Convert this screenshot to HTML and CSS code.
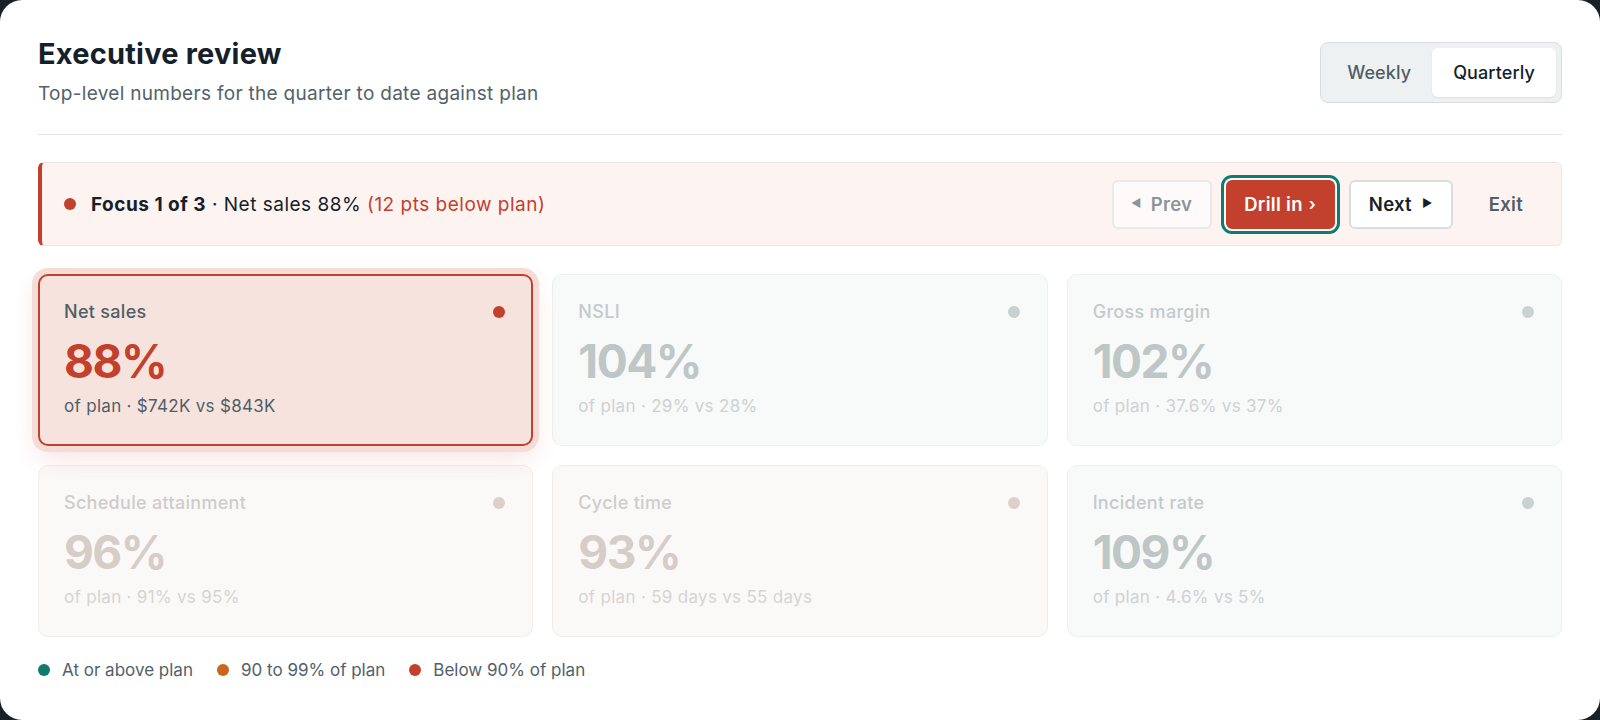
FILE: index.html
```html
<!DOCTYPE html>
<html lang="en">
<head>
<meta charset="utf-8">
<title>Executive review</title>
<link rel="stylesheet" href="styles.css">
</head>
<body>
<main class="panel">
  <header class="head">
    <div class="head-text">
      <h1 class="title">Executive review</h1>
      <p class="subtitle">Top-level numbers for the quarter to date against plan</p>
    </div>
    <div class="seg">
      <button class="seg-btn">Weekly</button>
      <button class="seg-btn seg-on">Quarterly</button>
    </div>
  </header>

  <section class="focus">
    <div class="focus-msg">
      <span class="dot dot-red"></span>
      <span><b>Focus 1 of 3</b> · Net sales 88% <span class="below">(12 pts below plan)</span></span>
    </div>
    <div class="focus-actions">
      <button class="btn btn-prev"><span class="tri">◀</span>Prev</button>
      <button class="btn btn-drill">Drill in <span class="chev">›</span></button>
      <button class="btn btn-next">Next<span class="tri tri-r">▶</span></button>
      <button class="btn btn-exit">Exit</button>
    </div>
  </section>

  <section class="grid">
    <article class="card card-focus">
      <div class="card-top"><span class="card-label">Net sales</span><span class="dot dot-red"></span></div>
      <div class="card-value">88%</div>
      <div class="card-sub">of plan · $742K vs $843K</div>
    </article>
    <article class="card dim-cool">
      <div class="card-top"><span class="card-label">NSLI</span><span class="dot"></span></div>
      <div class="card-value">104%</div>
      <div class="card-sub">of plan · 29% vs 28%</div>
    </article>
    <article class="card dim-cool">
      <div class="card-top"><span class="card-label">Gross margin</span><span class="dot"></span></div>
      <div class="card-value">102%</div>
      <div class="card-sub">of plan · 37.6% vs 37%</div>
    </article>
    <article class="card dim-warm">
      <div class="card-top"><span class="card-label">Schedule attainment</span><span class="dot"></span></div>
      <div class="card-value">96%</div>
      <div class="card-sub">of plan · 91% vs 95%</div>
    </article>
    <article class="card dim-warm">
      <div class="card-top"><span class="card-label">Cycle time</span><span class="dot"></span></div>
      <div class="card-value">93%</div>
      <div class="card-sub">of plan · 59 days vs 55 days</div>
    </article>
    <article class="card dim-cool">
      <div class="card-top"><span class="card-label">Incident rate</span><span class="dot"></span></div>
      <div class="card-value">109%</div>
      <div class="card-sub">of plan · 4.6% vs 5%</div>
    </article>
  </section>

  <footer class="legend">
    <span class="legend-item"><span class="dot dot-teal"></span>At or above plan</span>
    <span class="legend-item"><span class="dot dot-amber"></span>90 to 99% of plan</span>
    <span class="legend-item"><span class="dot dot-red"></span>Below 90% of plan</span>
  </footer>
</main>
</body>
</html>
```

FILE: styles.css
```css
* { box-sizing: border-box; }
html, body { margin: 0; padding: 0; }
body {
  background: #16212a;
  font-family: Inter, "Noto Sans", Arial, sans-serif;
  color: #15222a;
  width: 1600px;
  height: 720px;
  overflow: hidden;
}
.panel {
  background: #ffffff;
  width: 1600px;
  height: 720px;
  border-radius: 22px;
  padding: 36px 38px 0 38px;
}
.head {
  display: flex;
  justify-content: space-between;
  align-items: center;
  padding-bottom: 27px;
  border-bottom: 1px solid #e1e5e6;
}
.title {
  margin: 0;
  font-size: 29px;
  line-height: 36px;
  font-weight: 700;
  letter-spacing: 0.2px;
  color: #14212a;
}
.subtitle {
  margin: 9px 0 0 0;
  font-size: 19px;
  line-height: 26px;
  color: #52616a;
  letter-spacing: 0.3px;
}
.seg {
  display: flex;
  padding: 5px;
  background: #eef1f2;
  border: 1px solid #d8dee0;
  border-radius: 8px;
  margin-top: 2px;
}
.seg-btn {
  font-family: inherit;
  font-size: 18px;
  font-weight: 500;
  height: 49px;
  padding: 0 21px;
  border: 0;
  background: transparent;
  color: #4f5f67;
  border-radius: 6px;
  letter-spacing: 0.1px;
}
.seg-on {
  background: #ffffff;
  color: #14212a;
  box-shadow: 0 1px 2px rgba(20, 33, 42, 0.08);
}

.focus {
  margin-top: 27px;
  height: 84px;
  display: flex;
  align-items: center;
  justify-content: space-between;
  background: #fdf3f1;
  border: 1px solid #f1e3e0;
  border-left: 4px solid #c3402d;
  border-radius: 6px;
  padding: 0 16px 0 22px;
}
.focus-msg {
  display: flex;
  align-items: center;
  gap: 15px;
  font-size: 19px;
  letter-spacing: 0.5px;
  color: #14212a;
}
.focus-msg b { font-weight: 700; }
.below { color: #c3402d; }
.focus-actions {
  display: flex;
  align-items: center;
  gap: 14px;
}
.btn {
  font-family: inherit;
  font-size: 18.5px;
  font-weight: 600;
  letter-spacing: 0.3px;
  height: 49px;
  border-radius: 6px;
  border: 2px solid transparent;
  padding: 0 16px;
  background: transparent;
  display: inline-flex;
  align-items: center;
  justify-content: center;
}
.tri {
  font-size: 11px;
  margin-right: 9px;
  position: relative;
  top: -1px;
}
.tri-r { margin-right: 0; margin-left: 10px; }
.chev { margin-left: 6px; font-size: 17px; }
.btn-prev {
  width: 100px;
  color: #8d9497;
  border-color: #e8eaea;
  background: #fefaf9;
}
.btn-drill {
  width: 109px;
  color: #ffffff;
  background: #c3402d;
  border-color: #c3402d;
  box-shadow: 0 0 0 2px #ffffff, 0 0 0 5px #0f7a70;
}
.btn-next {
  width: 104px;
  color: #14212a;
  background: #ffffff;
  border-color: #d8dee0;
}
.btn-exit {
  color: #4f5f67;
  padding: 0 20px;
}

.grid {
  margin-top: 28px;
  display: grid;
  grid-template-columns: repeat(3, 1fr);
  column-gap: 19px;
  row-gap: 19px;
}
.card {
  height: 172px;
  border-radius: 10px;
  border: 1px solid #edf0f0;
  padding: 26px 25px 0 25px;
}
.card-top {
  display: flex;
  justify-content: space-between;
  align-items: center;
  height: 22px;
}
.card-label {
  font-size: 18px;
  font-weight: 500;
  line-height: 22px;
  letter-spacing: 0.3px;
}
.card-value {
  margin-top: 12px;
  font-size: 46px;
  line-height: 52px;
  font-weight: 700;
  letter-spacing: -1.5px;
}
.card-sub {
  margin-top: 8px;
  font-size: 17px;
  line-height: 22px;
  letter-spacing: 0.3px;
}
.card-top .dot { margin-right: 2px; }

.card-focus {
  background: #f7e3de;
  border: 2px solid #c3402d;
  padding: 25px 24px 0 24px;
  box-shadow: 0 0 0 6px #f6dcd6, 0 10px 26px rgba(195, 64, 45, 0.16);
  position: relative;
  z-index: 1;
}
.card-focus .card-label { color: #4f5f67; }
.card-focus .card-value { color: #c3402d; }
.card-focus .card-sub { color: #4f5f67; }

.dim-cool { background: #f8f9f9; }
.dim-cool .card-label { color: #c4cacc; }
.dim-cool .card-value { color: #bfc6c6; }
.dim-cool .card-sub { color: #cdd2d3; }
.dim-cool .dot { background: #c9d1d2; }

.dim-warm { background: #faf9f8; border-color: #f0eeec; }
.dim-warm .card-label { color: #cfcccb; }
.dim-warm .card-value { color: #d6cdc8; }
.dim-warm .card-sub { color: #d6d4d2; }
.dim-warm .dot { background: #ddd0ca; }

.dot {
  display: inline-block;
  width: 12px;
  height: 12px;
  border-radius: 50%;
  flex: none;
}
.dot-red { background: #c3402d !important; }
.dot-teal { background: #0f7a70; }
.dot-amber { background: #c9661c; }

.legend {
  margin-top: 22px;
  display: flex;
  gap: 24px;
  font-size: 17px;
  line-height: 22px;
  color: #52616a;
  padding-left: 0;
}
.legend-item {
  display: flex;
  align-items: center;
  gap: 12px;
}
```
